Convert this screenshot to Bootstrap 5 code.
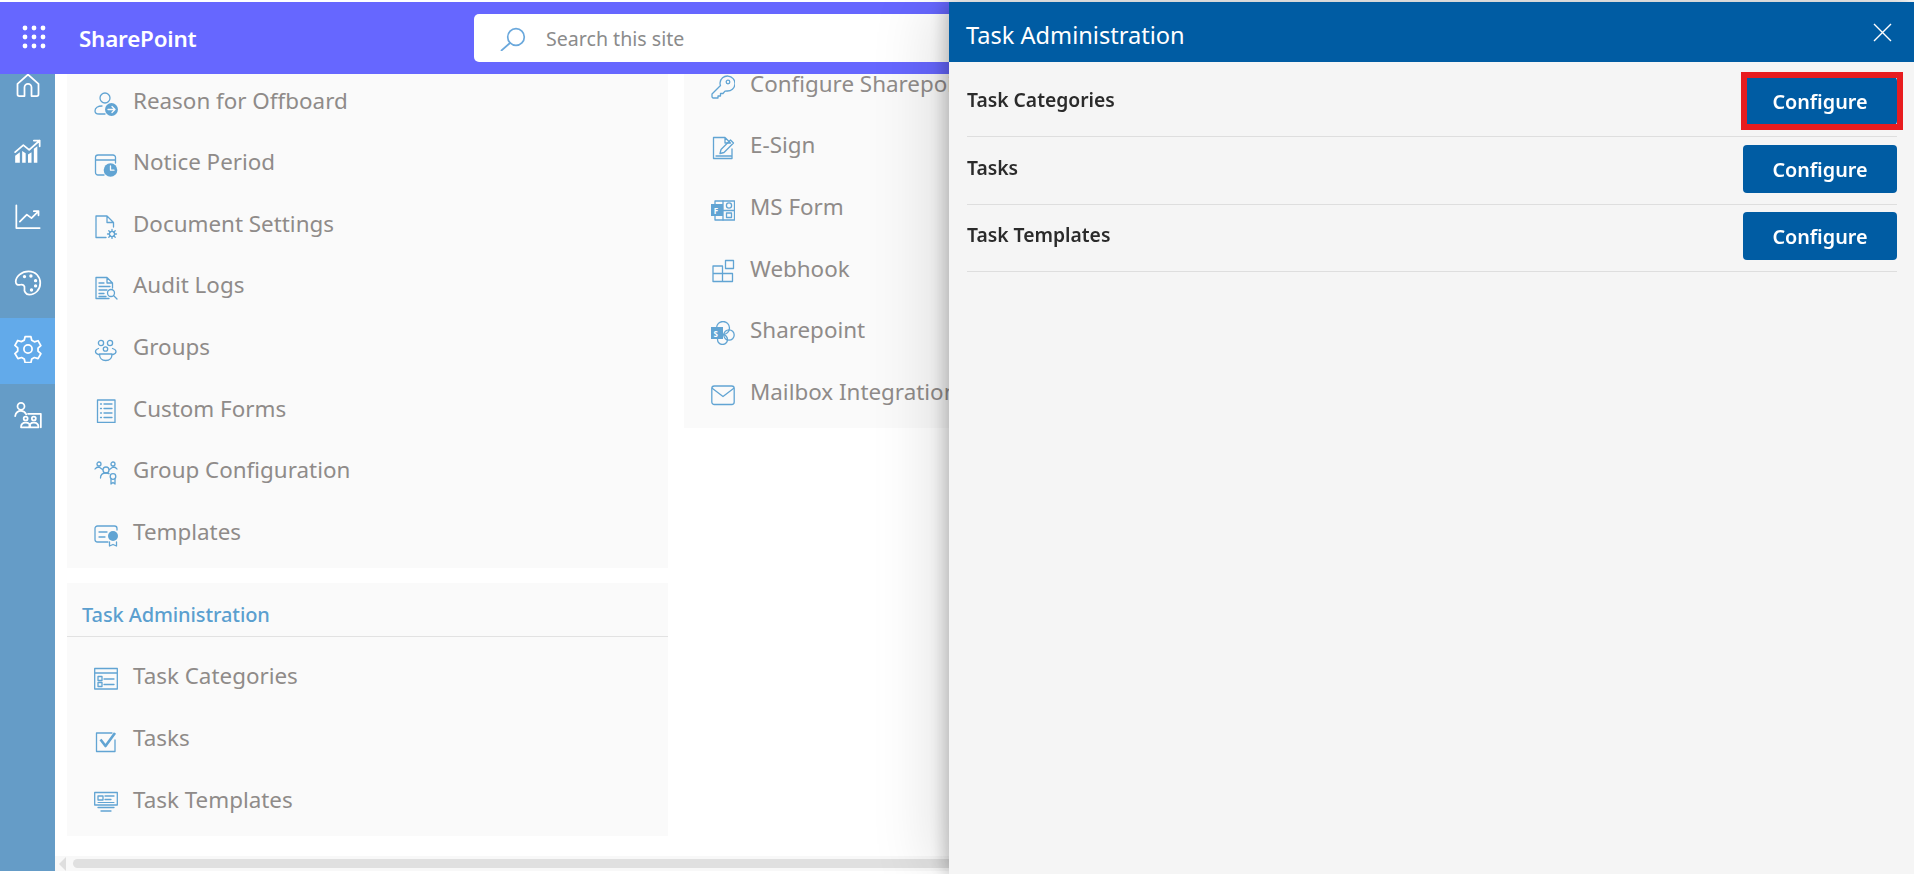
<!DOCTYPE html>
<html lang="en">
<head>
<meta charset="utf-8">
<title>Task Administration</title>
<link href="https://cdn.jsdelivr.net/npm/bootstrap@5.3.0/dist/css/bootstrap.min.css" rel="stylesheet">
<style>
html,body{height:874px;overflow:hidden}
body{padding:2px 0 3px;background:#fff;font-family:"Noto Sans","Open Sans","Liberation Sans",sans-serif;color:#8f8b89}
.sp-page{height:869px}
.sp-top{height:72px;background:#6667ff;position:relative;z-index:2;flex:none}
.sp-waffle{width:55px;flex:none}
.sp-brand{width:419px;padding:2px 0 0 24px;font-size:22.4px;font-weight:600;color:#fff;letter-spacing:-.2px}
.sp-search{width:640px;height:48px;background:#fff;border-radius:5px;padding-left:26px;gap:20px;font-size:19.6px;color:#8b8b8b}
.sp-search span{margin-top:2px}
.sp-rail{width:55px;flex:none;background:#659cc7;overflow:hidden}
.sp-rail-list{margin-top:-20px}
.sp-rail-item{height:66px;padding-bottom:4px}
.sp-rail-item.sp-on{background:#62aaea}
.sp-rail svg{width:28px;height:28px;fill:none;stroke:#fff;stroke-width:1.5;stroke-linecap:round;stroke-linejoin:round}
.sp-main{min-width:0;overflow:hidden}
.sp-cols{gap:16px;padding-left:12px;overflow:hidden;min-height:0}
.sp-col{width:601px;flex:none}
.sp-col-a{margin-top:-3.8px}
.sp-col-b{margin-top:-20.6px}
.sp-panel{background:#fafafa}
.sp-panel+.sp-panel{margin-top:15px}
.sp-panel-head{height:54px;padding:11px 0 0 15px;border-bottom:1px solid #e2e2e2;font-size:20px;font-weight:500;color:#5b9fcf;letter-spacing:-.1px}
.sp-rows{padding-bottom:5px}
.sp-head-rows{padding-top:9px}
.sp-row{height:61.6px;padding-left:27px;gap:15px;font-size:22.4px;white-space:nowrap}
.sp-row span{margin-top:-1px}
.sp-row svg{width:24px;height:24px;flex:none;margin-top:5px;fill:none;stroke:#61a4d3;stroke-width:1.3;stroke-linecap:round;stroke-linejoin:round}
.sp-row svg .f{fill:#61a4d3;stroke:none}
.sp-row svg .w{stroke:#fafafa}
.sp-row svg text{fill:#fff;stroke:none;font:700 8px "Noto Sans",sans-serif}
.sp-scroll{height:15px;flex:none;background:#f8f8f8;padding-left:4px;gap:7px}
.sp-arrow{width:0;height:0;border-top:7px solid transparent;border-bottom:7px solid transparent;border-right:7px solid #dedede}
.sp-thumb{height:9px;flex:1;background:#e0e0e0;border-radius:5px}
.offcanvas.sp-side{--bs-offcanvas-width:965px;--bs-offcanvas-bg:#f5f5f5;top:2px;border:0;box-shadow:-4px 0 16px rgba(0,0,0,.22),-16px 0 60px rgba(0,0,0,.12);color:#2b2b2b}
.sp-side .offcanvas-header{height:60px;padding:0 22px 0 17px;background:#005ca3;color:#fff}
.sp-side .offcanvas-title{font-size:23.6px;font-weight:400;line-height:1;margin-top:8px}
.sp-x{background:none;border:0;padding:0;line-height:0}
.sp-x svg{width:19px;height:19px;stroke:#fff;stroke-width:1.4;fill:none}
.sp-side .offcanvas-body{padding:0 17px 0 18px;overflow:hidden}
.sp-line{padding:8px 0 11px;border-bottom:1px solid #dedede;font-size:19.3px;font-weight:600}
.sp-line-first{padding-top:15px}
.sp-line-last{padding-top:7px}
.sp-line-label{margin-top:-1px}
.sp-go{width:154px;height:48px;background:#005ca3;border:0;border-radius:4px;color:#fff;font-size:19.8px;font-weight:600;padding:2px 0 0}
.sp-go:hover{background:#005ca3;color:#fff}
.sp-mark{position:relative}
.sp-mark::after{content:"";position:absolute;left:-2px;right:-6px;top:-5px;bottom:-5px;border:6px solid #e81c1f}
</style>
</head>
<body>
<div class="sp-page d-flex flex-column">
  <header class="sp-top d-flex align-items-center">
    <div class="sp-waffle d-flex justify-content-center ps-2">
      <svg width="24" height="24" viewBox="0 0 24 24" fill="#fff" style="margin-left:5px;margin-top:-2px"><circle cx="3" cy="3" r="2.400"/><circle cx="12" cy="3" r="2.400"/><circle cx="21" cy="3" r="2.400"/><circle cx="3" cy="12" r="2.400"/><circle cx="12" cy="12" r="2.400"/><circle cx="21" cy="12" r="2.400"/><circle cx="3" cy="21" r="2.400"/><circle cx="12" cy="21" r="2.400"/><circle cx="21" cy="21" r="2.400"/></svg>
    </div>
    <div class="sp-brand">SharePoint</div>
    <div class="sp-search d-flex align-items-center">
      <svg width="26" height="26" viewBox="0 0 26 26" fill="none" stroke="#6aa8dc" stroke-width="1.7" stroke-linecap="round"><circle cx="16" cy="12" r="8.300"/><path d="M10 18 1.500 25.500"/></svg>
      <span>Search this site</span>
    </div>
  </header>
  <div class="d-flex flex-grow-1" style="min-height:0">
    <nav class="sp-rail">
      <div class="sp-rail-list">
        <div class="sp-rail-item d-flex align-items-center justify-content-center"><svg viewBox="0 0 24 24"><path d="M3 11 12 3l9 8v9a1.500 1.500 0 0 1-1.500 1.500H15V14a3 3 0 0 0-6 0v7.500H4.500A1.500 1.500 0 0 1 3 20z"/></svg></div>
        <div class="sp-rail-item d-flex align-items-center justify-content-center"><svg viewBox="0 0 24 24"><path d="M1 13 8 7l5 4 9-8M17 3h5v5"/><path fill="#fff" stroke="none" d="M1 16l4-3v9H1zM7 12l3 2v8H7zM12 15l3-2v9h-3zM17 10l3-2v14h-3z"/></svg></div>
        <div class="sp-rail-item d-flex align-items-center justify-content-center"><svg viewBox="0 0 24 24"><path d="M2 2v19.500h20M5 16l6-6 4 3 6-6M17 7h4v3.500"/></svg></div>
        <div class="sp-rail-item d-flex align-items-center justify-content-center"><svg viewBox="0 0 24 24"><path d="M12.500 2C6.500 2 1.500 6.500 1.500 11c0 2.500 2 3 4 2.500 2-.5 4 .5 3.500 3s1 5.500 4 5.500c5.500 0 9.500-4.500 9.500-10S18.500 2 12.500 2z"/><circle cx="9" cy="6.500" r=".7" fill="#fff"/><circle cx="14.500" cy="6" r=".7" fill="#fff"/><circle cx="18.500" cy="10" r=".7" fill="#fff"/><circle cx="18.500" cy="14.500" r=".7" fill="#fff"/><circle cx="15" cy="18" r=".7" fill="#fff"/></svg></div>
        <div class="sp-rail-item sp-on d-flex align-items-center justify-content-center"><svg viewBox="0 0 24 24"><circle cx="12" cy="12" r="3.500"/><path d="M9.500 2h5l.7 3.200 2.300 1.300 3.100-1 2.400 4.300-2.400 2.200v2.700l2.400 2.200-2.400 4.300-3.100-1-2.300 1.300-.7 3.200h-5l-.7-3.200-2.300-1.300-3.100 1L.8 16.700l2.400-2.200v-2.700L.8 9.600l2.400-4.300 3.100 1 2.500-1.300z" transform="translate(0 -.5) scale(1 .98)"/></svg></div>
        <div class="sp-rail-item d-flex align-items-center justify-content-center"><svg viewBox="0 0 24 24"><circle cx="6" cy="4.500" r="3"/><path d="M1 13c.5-3 2.500-4.500 5-4.500 2 0 3.500 1 4.500 3M12 11h11v11.500"/><circle cx="10" cy="15" r="1.700"/><circle cx="17" cy="15" r="1.700"/><path d="M6 22.500c0-2.500 1.500-4 4-4s4 1.500 4 4M13 22.500c0-2.500 1.500-4 4-4s4 1.500 4 4M6 22.500h15"/></svg></div>
      </div>
    </nav>
    <main class="sp-main flex-grow-1 d-flex flex-column">
      <div class="sp-cols d-flex flex-grow-1">
        <div class="sp-col sp-col-a">
          <section class="sp-panel">
            <div class="sp-rows">
              <div class="sp-row d-flex align-items-center"><svg viewBox="0 0 24 24"><circle cx="11" cy="6" r="5"/><path d="M8 14c-4 0-7 2-7 5 0 2 2 3 4 3h6"/><circle class="f" cx="17.500" cy="17.500" r="6.500"/><path class="w" d="M14 17.500h7M18 14.500l3 3-3 3"/></svg><span>Reason for Offboard</span></div>
              <div class="sp-row d-flex align-items-center"><svg viewBox="0 0 24 24"><path d="M10 22H4a2.500 2.500 0 0 1-2.500-2.500v-15A2.500 2.500 0 0 1 4 2h15a2.500 2.500 0 0 1 2.500 2.500V10M1.500 7h20"/><circle class="f" cx="16.500" cy="17" r="6.800"/><path class="w" d="M16.500 13v4.200h3.500"/></svg><span>Notice Period</span></div>
              <div class="sp-row d-flex align-items-center"><svg viewBox="0 0 24 24"><path d="M12 22.500H2V1h11l6.500 6.500V12M13 1v6.500h6.500"/><circle cx="18" cy="19" r="2.600"/><path d="M18 14.500v2M18 21.500v2M13.500 19h2M20.500 19h2M14.800 15.800l1.400 1.400M19.800 20.800l1.400 1.400M14.800 22.200l1.400-1.400M19.800 17.200l1.400-1.400"/></svg><span>Document Settings</span></div>
              <div class="sp-row d-flex align-items-center"><svg viewBox="0 0 24 24"><path d="M18.500 12V7L13 1.500H2v21h13M13 1.500V7h5.500M5 7h5M5 10.500h11M5 14h8M5 17.500h5M5 20.500h7"/><circle cx="17" cy="17" r="3.500"/><path d="m19.500 19.500 3.500 3.500"/></svg><span>Audit Logs</span></div>
              <div class="sp-row d-flex align-items-center"><svg viewBox="0 0 24 24"><circle cx="7" cy="5" r="2.600"/><circle cx="16" cy="5" r="2.600"/><circle cx="11.500" cy="11" r="2.200"/><path d="M4.500 10.500C3 11 1.500 12 1.500 13.500c0 1.300 1 2.500 3 3M18.500 10.500c1.500.5 3.500 1.500 3.500 3 0 1.300-1 2.500-3 3M5.500 16h12.500c0 4-2.500 6.500-6.300 6.500S5.500 20 5.500 16z"/></svg><span>Groups</span></div>
              <div class="sp-row d-flex align-items-center"><svg viewBox="0 0 24 24"><path d="M3.500 1h17.500v22.500H3.500zM6.500 5h1M10 5h8M6.500 9.500h1M10 9.500h8M6.500 14h1M10 14h8M6.500 18.500h1M10 18.500h8"/></svg><span>Custom Forms</span></div>
              <div class="sp-row d-flex align-items-center"><svg viewBox="0 0 24 24"><circle cx="5" cy="3" r="2"/><circle cx="19" cy="3" r="2"/><circle cx="12" cy="9" r="3"/><path d="M1 8c1-1.500 2.500-2 4-2l3.500 2.500M23 8c-1-1.500-2.500-2-4-2l-3.500 2.500M6.500 17c0-3 2-5 5.500-5 1 0 2 .2 3 .7"/><circle cx="19" cy="15.500" r="2.800"/><path d="M17 18v5l2-1.500 2 1.500v-5"/></svg><span>Group Configuration</span></div>
              <div class="sp-row d-flex align-items-center"><svg viewBox="0 0 24 24"><path d="M14 19H3.500A2.500 2.500 0 0 1 1 16.500v-11A2.500 2.500 0 0 1 3.500 3h17A2.500 2.500 0 0 1 23 5.500V7M5 9h8M5 14h6"/><circle class="f" cx="19" cy="13" r="5"/><path d="M15.500 19v4l3.500-1.500 3.500 1.500v-4"/></svg><span>Templates</span></div>
            </div>
          </section>
          <section class="sp-panel">
            <div class="sp-panel-head d-flex align-items-center">Task Administration</div>
            <div class="sp-rows sp-head-rows">
              <div class="sp-row d-flex align-items-center"><svg viewBox="0 0 24 24"><path d="M.7 1.500h22.600v20.500H.7zM.7 6h22.600M10 12h10M10 17.500h10"/><path d="M4 9.500h4v4H4zM4 15.500h4v4H4z"/></svg><span>Task Categories</span></div>
              <div class="sp-row d-flex align-items-center"><svg viewBox="0 0 24 24"><path d="M21 11v11.500H2.500V4H18"/><path d="m6.500 10.500 5 6.500 9.500-13" stroke-width="2.600" stroke-linecap="butt"/></svg><span>Tasks</span></div>
              <div class="sp-row d-flex align-items-center"><svg viewBox="0 0 24 24"><path d="M.7 2.500h22.600v12.500H.7zM4 6h5v4H4zM11 6h9M11 9.500h6M4 17.500h16M7 21h10"/><path d="M4 12.500h16" stroke-width="1"/></svg><span>Task Templates</span></div>
            </div>
          </section>
        </div>
        <div class="sp-col sp-col-b">
          <section class="sp-panel">
            <div class="sp-rows">
              <div class="sp-row d-flex align-items-center"><svg viewBox="0 0 24 24"><path d="M9 8a7.500 7.500 0 1 1 7 8l-2 .1-2 2.400H9.500V21H7v2H2l-1-1v-3l8.500-8.500A7 7 0 0 1 9 8z"/><circle cx="17" cy="7" r="1.800"/></svg><span>Configure Sharepoint</span></div>
              <div class="sp-row d-flex align-items-center"><svg viewBox="0 0 24 24"><path d="M14 1.500H2.500v21h18.500V13M14 1.500V7h5.500M14 1.500l5.500 5.500M5 20h15"/><path d="M9 17.500l1-4L19.500 4l3 3-9.500 9.500z"/></svg><span>E-Sign</span></div>
              <div class="sp-row d-flex align-items-center"><svg viewBox="0 0 24 24"><path d="M4 3h19.500v19H4z"/><path d="M12 3v19M12 12.500h11.500"/><circle cx="18" cy="7.500" r="2.600"/><path d="M15.500 15h5v4.500h-5z"/><rect class="f" x="0" y="6" width="12" height="12"/><text x="2.800" y="15.500">F</text></svg><span>MS Form</span></div>
              <div class="sp-row d-flex align-items-center"><svg viewBox="0 0 24 24"><path d="M2 7h9.500v15.500H2zM2 14.500h19.500v8h-10M11.500 14.500V7M14.500 1.500h8v8h-8z"/></svg><span>Webhook</span></div>
              <div class="sp-row d-flex align-items-center"><svg viewBox="0 0 24 24"><circle cx="12" cy="7" r="6.500"/><circle cx="18" cy="14" r="5.200"/><circle cx="11.500" cy="18.500" r="5"/><rect class="f" x="0" y="6" width="12" height="12"/><text x="2.500" y="15.500">S</text></svg><span>Sharepoint</span></div>
              <div class="sp-row d-flex align-items-center"><svg viewBox="0 0 24 24"><rect x=".8" y="3" width="22.400" height="18.500" rx="2.500"/><path d="m1.500 5.500 10.500 8 10.500-8"/></svg><span>Mailbox Integration</span></div>
            </div>
          </section>
        </div>
      </div>
      <div class="sp-scroll d-flex align-items-center">
        <span class="sp-arrow"></span>
        <span class="sp-thumb"></span>
      </div>
    </main>
  </div>
</div>

<aside class="offcanvas offcanvas-end show sp-side" tabindex="-1" aria-labelledby="sp-title" data-bs-backdrop="false" data-bs-scroll="true">
  <div class="offcanvas-header">
    <h5 class="offcanvas-title" id="sp-title">Task Administration</h5>
    <button type="button" class="sp-x" aria-label="Close"><svg viewBox="0 0 19 19"><path d="M1 1l17 17M18 1 1 18"/></svg></button>
  </div>
  <div class="offcanvas-body">
    <div class="sp-line sp-line-first d-flex justify-content-between align-items-center"><span class="sp-line-label">Task Categories</span><span class="sp-mark d-inline-block"><button class="btn sp-go d-block">Configure</button></span></div>
    <div class="sp-line d-flex justify-content-between align-items-center"><span class="sp-line-label">Tasks</span><button class="btn sp-go">Configure</button></div>
    <div class="sp-line sp-line-last d-flex justify-content-between align-items-center"><span class="sp-line-label">Task Templates</span><button class="btn sp-go">Configure</button></div>
  </div>
</aside>
<script src="https://cdn.jsdelivr.net/npm/bootstrap@5.3.0/dist/js/bootstrap.bundle.min.js"></script>
</body>
</html>
